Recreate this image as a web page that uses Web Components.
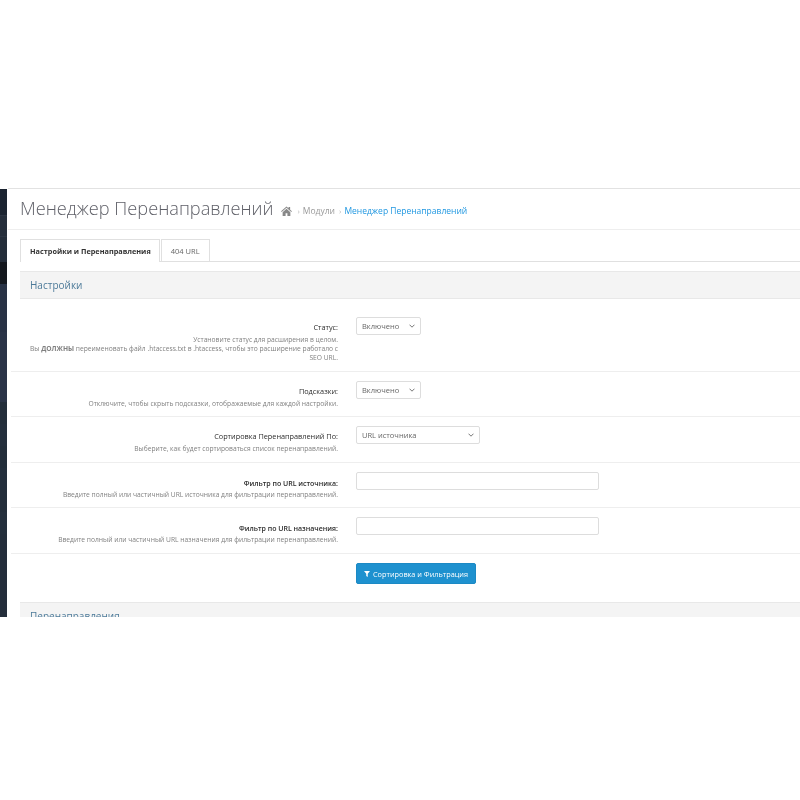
<!DOCTYPE html>
<html lang="ru">
<head>
<meta charset="utf-8">
<title>Менеджер Перенаправлений</title>
<style>
  html, body { margin: 0; padding: 0; background: #fff; }
  body { font-family: "Open Sans", "Noto Sans", sans-serif; font-size: 8px; color: #555; }
</style>
</head>
<body>
<admin-frame>
  <side-strip slot="side"></side-strip>
  <page-header></page-header>
  <nav-tabs></nav-tabs>
  <panel-heading>Настройки</panel-heading>
  <form-row label="Статус:" rowheight="73" pad="18">
    <span slot="help">Установите статус для расширения в целом.<br>Вы <b>ДОЛЖНЫ</b> переименовать файл .htaccess.txt в .htaccess, чтобы это расширение работало с SEO URL.</span>
    <ui-select value="Включено" width="65"></ui-select>
  </form-row>
  <form-row label="Подсказки:" rowheight="45">
    <span slot="help">Отключите, чтобы скрыть подсказки, отображаемые для каждой настройки.</span>
    <ui-select value="Включено" width="65"></ui-select>
  </form-row>
  <form-row label="Сортировка Перенаправлений По:" rowheight="46">
    <span slot="help">Выберите, как будет сортироваться список перенаправлений.</span>
    <ui-select value="URL источника" width="124"></ui-select>
  </form-row>
  <form-row label="Фильтр по URL источника:" rowheight="45" strong>
    <span slot="help">Введите полный или частичный URL источника для фильтрации перенаправлений.</span>
    <ui-input></ui-input>
  </form-row>
  <form-row label="Фильтр по URL назначения:" rowheight="46" strong>
    <span slot="help">Введите полный или частичный URL назначения для фильтрации перенаправлений.</span>
    <ui-input></ui-input>
  </form-row>
  <form-row rowheight="48" plain>
    <ui-button>Сортировка и Фильтрация</ui-button>
  </form-row>
  <panel-heading>Перенаправления</panel-heading>
</admin-frame>

<script>
class AdminFrame extends HTMLElement {
  constructor() {
    super();
    this.attachShadow({ mode: 'open' });
    this.shadowRoot.innerHTML = `
      <style>
        :host {
          display: flex;
          margin-top: 188px;
          height: 429px;
          overflow: hidden;
          background: #fff;
          filter: blur(0.4px);
        }
        .main {
          flex: 1;
          min-width: 0;
          border-top: 1px solid #e2e2e2;
        }
        .side { flex: 0 0 8px; padding-top: 1px; box-sizing: border-box; }
      </style>
      <div class="side"><slot name="side"></slot></div>
      <div class="main"><slot></slot></div>
    `;
  }
}

class SideStrip extends HTMLElement {
  constructor() {
    super();
    this.attachShadow({ mode: 'open' });
    const bands = [
      [26, '#1b2431'], [1, '#2c3543'], [20, '#252e3b'], [1, '#2c3543'], [25, '#242d3a'],
      [22, '#14181e'], [48, '#283245'], [70, '#2a3447'], [22, '#232e3a'], [22, '#242f3c'],
      [22, '#232e3a'], [22, '#242f3c'], [22, '#232e3a'], [22, '#242f3c'], [90, '#242e3b']
    ];
    const html = bands.map(b => `<i style="height:${b[0]}px;background:${b[1]}"></i>`).join('');
    this.shadowRoot.innerHTML = `
      <style>
        :host { display: flex; flex-direction: column; width: 7px; }
        i { display: block; flex: none; }
      </style>
      ${html}
    `;
  }
}

class PageHeader extends HTMLElement {
  constructor() {
    super();
    this.attachShadow({ mode: 'open' });
    this.shadowRoot.innerHTML = `
      <style>
        :host {
          display: flex;
          align-items: center;
          height: 40px;
          padding-left: 12px;
          border-bottom: 1px solid #eee;
          white-space: nowrap;
        }
        h1 {
          margin: 0 8px 2px 0;
          font: 300 18.200px/28px "Open Sans", sans-serif;
          color: #5f6068;
        }
        nav { display: flex; align-items: center; font-size: 8.500px; color: #999; padding-top: 3px; }
        svg { width: 11px; height: 10px; fill: #888; display: block; }
        .sep { color: #bbb; font-size: 8px; margin: 0 3px 0 5px; }
        a { color: #1e96e0; text-decoration: none; }
      </style>
      <h1>Менеджер Перенаправлений</h1>
      <nav>
        <svg viewBox="0 0 24 22"><path d="M12 1 0 11.500l1.500 1.700L12 4l10.500 9.200 1.500-1.700-4-3.500V2h-3.500v2.900z"/><path d="M12 6 3.500 13.500V22H10v-6h4v6h6.500v-8.500z"/></svg>
        <span class="sep">›</span><span>Модули</span>
        <span class="sep" style="margin-left:4px">›</span><a>Менеджер Перенаправлений</a>
      </nav>
    `;
  }
}

class NavTabs extends HTMLElement {
  constructor() {
    super();
    this.attachShadow({ mode: 'open' });
    this.shadowRoot.innerHTML = `
      <style>
        :host {
          display: flex;
          height: 22px;
          margin: 9px 0 9px 12px;
          border-bottom: 1px solid #e0e0e0;
        }
        span {
          display: block;
          height: 22px;
          line-height: 22px;
          padding: 0 9px;
          border: 1px solid #e0e0e0;
          border-bottom: 0;
          box-sizing: border-box;
          margin-right: 1px;
          color: #666;
          font-size: 7.500px;
        }
        .on {
          font-weight: 700;
          color: #333;
          background: #fff;
          height: 23px;
          padding-right: 8px;
          font-size: 7.300px;
        }
      </style>
      <span class="on">Настройки и Перенаправления</span>
      <span>404 URL</span>
    `;
  }
}

class PanelHeading extends HTMLElement {
  constructor() {
    super();
    this.attachShadow({ mode: 'open' });
    this.shadowRoot.innerHTML = `
      <style>
        :host {
          display: flex;
          align-items: center;
          height: 28px;
          margin-left: 12px;
          padding-left: 10px;
          background: #f4f4f4;
          border-top: 1px solid #e8e8e8;
          border-bottom: 1px solid #e8e8e8;
          box-sizing: border-box;
          font-size: 10px;
          color: #4c7a99;
        }
      </style>
      <slot></slot>
    `;
  }
}

class FormRow extends HTMLElement {
  constructor() {
    super();
    this.attachShadow({ mode: 'open' });
  }

  connectedCallback() {
    const h = this.getAttribute('rowheight') || 45;
    const plain = this.hasAttribute('plain');
    const strong = this.hasAttribute('strong');
    const pad = this.getAttribute('pad') || 9;
    this.shadowRoot.innerHTML = `
      <style>
        :host {
          display: grid;
          grid-template-columns: 327px 1fr;
          column-gap: 18px;
          height: ${h}px;
          margin-left: 3px;
          box-sizing: border-box;
          border-bottom: ${plain ? '0' : '1px solid #eee'};
          padding-top: ${pad}px;
        }
        .label { text-align: right; padding-top: ${strong ? 6 : 5}px; }
        .title { font-size: ${strong ? 7 : 7.300}px; line-height: 11px; font-weight: ${strong ? 600 : 400}; color: #2c2c2c; }
        .help { font-size: 6.700px; line-height: 9px; color: #808080; margin-top: ${strong ? 1 : 2}px; padding-left: 18px; }
      </style>
      <div class="label">
        <div class="title">${this.getAttribute('label') || ''}</div>
        <div class="help"><slot name="help"></slot></div>
      </div>
      <div class="control"><slot></slot></div>
    `;
  }
}

class UiSelect extends HTMLElement {
  constructor() {
    super();
    this.attachShadow({ mode: 'open' });
  }

  connectedCallback() {
    this.shadowRoot.innerHTML = `
      <style>
        :host {
          display: flex;
          align-items: center;
          justify-content: space-between;
          width: ${this.getAttribute('width')}px;
          height: 18px;
          padding: 0 5px 0 5px;
          box-sizing: border-box;
          border: 1px solid #ddd;
          border-radius: 2px;
          background: #fff;
          font-size: 7.500px;
          color: #666;
        }
        svg { width: 6px; height: 4px; fill: none; stroke: #777; stroke-width: 1; display: block; }
      </style>
      <span>${this.getAttribute('value')}</span>
      <svg viewBox="0 0 6 4"><path d="M.5.7 3 3.200 5.500.7"/></svg>
    `;
  }
}

class UiInput extends HTMLElement {
  constructor() {
    super();
    this.attachShadow({ mode: 'open' });
    this.shadowRoot.innerHTML = `
      <style>
        :host {
          display: block;
          width: 243px;
          height: 18px;
          box-sizing: border-box;
          border: 1px solid #ddd;
          border-radius: 2px;
          background: #fff;
        }
      </style>
    `;
  }
}

class UiButton extends HTMLElement {
  constructor() {
    super();
    this.attachShadow({ mode: 'open' });
    this.shadowRoot.innerHTML = `
      <style>
        :host {
          display: flex;
          align-items: center;
          justify-content: center;
          gap: 3px;
          width: 120px;
          height: 21px;
          box-sizing: border-box;
          background: #1e91cf;
          border: 1px solid #1c89c4;
          border-radius: 2px;
          color: #fff;
          font-size: 7.300px;
          white-space: nowrap;
        }
        svg { width: 6px; height: 6px; fill: #fff; display: block; }
      </style>
      <svg viewBox="0 0 12 12"><path d="M0 0h12L7.500 5.500V12L4.500 10V5.500z"/></svg>
      <slot></slot>
    `;
  }
}

customElements.define('admin-frame', AdminFrame);
customElements.define('side-strip', SideStrip);
customElements.define('page-header', PageHeader);
customElements.define('nav-tabs', NavTabs);
customElements.define('panel-heading', PanelHeading);
customElements.define('form-row', FormRow);
customElements.define('ui-select', UiSelect);
customElements.define('ui-input', UiInput);
customElements.define('ui-button', UiButton);
</script>
</body>
</html>
